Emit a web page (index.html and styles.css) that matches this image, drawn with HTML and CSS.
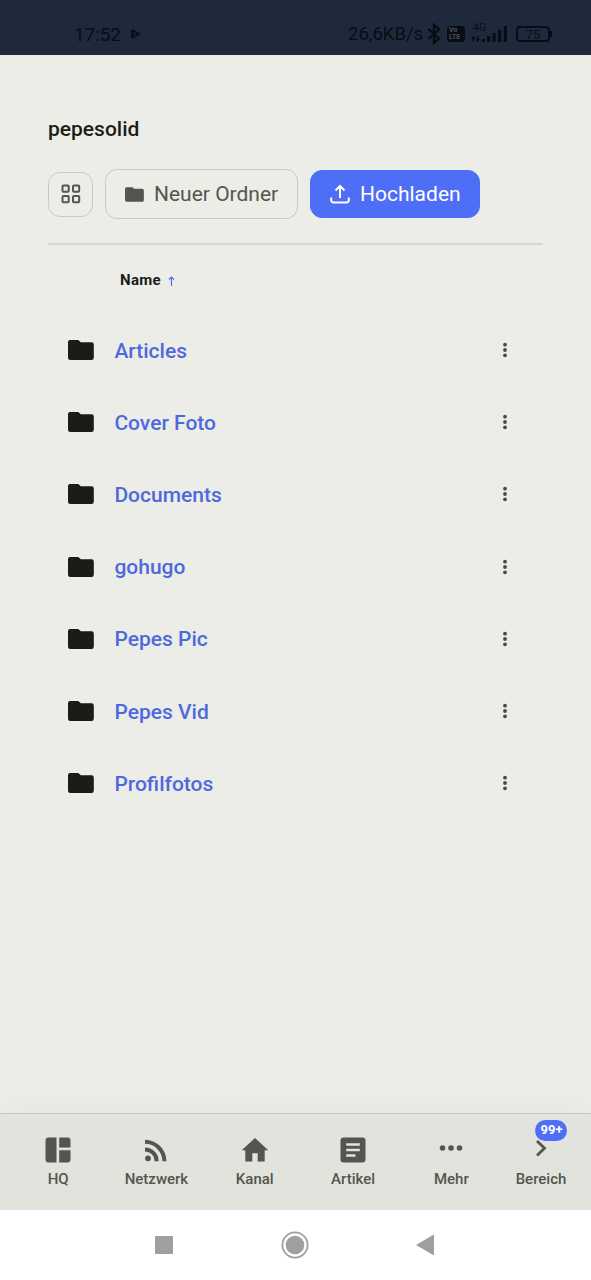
FILE: index.html
```html
<!DOCTYPE html>
<html lang="de">
<head>
<meta charset="utf-8">
<meta name="viewport" content="width=device-width, initial-scale=1">
<title>pepesolid</title>
<link rel="stylesheet" href="styles.css">
</head>
<body>
<svg width="0" height="0" class="defs">
  <symbol id="folder" viewBox="0 0 26 20"><path d="M2.200 0h8l2.600 2.300H23.500A2.300 2.300 0 0 1 25.800 4.600v13.100A2.300 2.300 0 0 1 23.500 20H2.500A2.500 2.500 0 0 1 0 17.500V2.200A2.200 2.200 0 0 1 2.200 0z" fill="currentColor"/></symbol>
  <symbol id="dots" viewBox="0 0 6 16"><g fill="currentColor"><circle cx="3" cy="2.700" r="1.900"/><circle cx="3" cy="8" r="1.900"/><circle cx="3" cy="13.300" r="1.900"/></g></symbol>
</svg>
<header class="status">
  <div class="status-left">
    <span class="clock">17:52</span>
    <svg width="11" height="12" viewBox="0 0 11 12" fill="none" stroke="currentColor" stroke-width="2"><path d="M2 1.800v8.400M2 2l7 4-7 4M2 6h3"/></svg>
  </div>
  <div class="status-right">
    <span class="rate">26,6KB/s</span>
    <svg class="bt" width="14" height="22" viewBox="0 0 14 22" fill="none" stroke="currentColor" stroke-width="2.300"><path d="M1.500 6L12 15.500 7 20V2l5 4.500L1.500 16"/></svg>
    <span class="volte"><span>Vo</span><span>LTE</span></span>
    <span class="signal">
      <span class="net">4G</span>
      <svg width="37" height="18" viewBox="0 0 37 18" fill="currentColor"><path d="M2 11l2.500 3H3v3H1.500v-3H0zM6.500 17L4.500 14H6v-3h1.500v3H9zM11 14h3v3h-3zM16 11h3.200v6H16zM21.500 8h3.200v9h-3.200zM27 5h3.200v12H27zM32.800 1H36v16h-3.200z"/></svg>
    </span>
    <span class="battery">75</span>
  </div>
</header>
<main class="files">
  <h1 class="title">pepesolid</h1>
  <div class="toolbar">
    <button class="btn view" aria-label="Ansicht"><svg width="20" height="20" viewBox="0 0 20 20" fill="none" stroke="currentColor" stroke-width="2"><rect x="1.500" y="1.500" width="6.200" height="6.200" rx="1"/><rect x="12" y="1.500" width="6.200" height="6.200" rx="1"/><rect x="1.500" y="12" width="6.200" height="6.200" rx="1"/><rect x="12" y="12" width="6.200" height="6.200" rx="1"/></svg></button>
    <button class="btn new"><svg width="19" height="15"><use href="#folder"/></svg><span>Neuer Ordner</span></button>
    <button class="btn upload"><svg width="20" height="20" viewBox="0 0 20 20" fill="none" stroke="currentColor" stroke-width="2"><path d="M10 14V2M5.500 6.500L10 2l4.500 4.500M1.200 13.500v2.700a2.300 2.300 0 0 0 2.300 2.300h13a2.300 2.300 0 0 0 2.300-2.300v-2.700"/></svg><span>Hochladen</span></button>
  </div>
  <div class="list-head"><span>Name</span><svg width="7" height="10" viewBox="0 0 7 10" fill="none" stroke="currentColor" stroke-width="1.200"><path d="M3.500 10V1M1 3.500L3.500 1 6 3.500"/></svg></div>
  <ul class="list">
    <li><svg class="folder"><use href="#folder"/></svg><a>Articles</a><svg class="more"><use href="#dots"/></svg></li>
    <li><svg class="folder"><use href="#folder"/></svg><a>Cover Foto</a><svg class="more"><use href="#dots"/></svg></li>
    <li><svg class="folder"><use href="#folder"/></svg><a>Documents</a><svg class="more"><use href="#dots"/></svg></li>
    <li><svg class="folder"><use href="#folder"/></svg><a>gohugo</a><svg class="more"><use href="#dots"/></svg></li>
    <li><svg class="folder"><use href="#folder"/></svg><a>Pepes Pic</a><svg class="more"><use href="#dots"/></svg></li>
    <li><svg class="folder"><use href="#folder"/></svg><a>Pepes Vid</a><svg class="more"><use href="#dots"/></svg></li>
    <li><svg class="folder"><use href="#folder"/></svg><a>Profilfotos</a><svg class="more"><use href="#dots"/></svg></li>
  </ul>
</main>
<nav class="tabs">
  <a class="tab"><svg viewBox="0 0 28 28"><path d="M4.500 1.500h8v25h-8a3 3 0 0 1-3-3v-19a3 3 0 0 1 3-3zM15.200 1.500h8.300a3 3 0 0 1 3 3v7H15.200zM15.200 14.200h11.300v9.300a3 3 0 0 1-3 3h-8.300z"/></svg><span>HQ</span></a>
  <a class="tab"><svg viewBox="0 0 28 28"><circle cx="6" cy="22.300" r="2.900"/><path d="M3 11.500v4a9.700 9.700 0 0 1 9.700 9.700h4A13.700 13.700 0 0 0 3 11.500zM3 3.800v4a17.400 17.400 0 0 1 17.400 17.400h4A21.400 21.400 0 0 0 3 3.800z"/></svg><span>Netzwerk</span></a>
  <a class="tab"><svg viewBox="0 0 28 28"><path d="M14 2L.7 14.200h3.600v11.300h7v-8.300h5.400v8.300h7V14.200h3.600z"/></svg><span>Kanal</span></a>
  <a class="tab"><svg viewBox="0 0 28 28"><path fill-rule="evenodd" d="M4.500 1.500h19a3 3 0 0 1 3 3v19a3 3 0 0 1-3 3h-19a3 3 0 0 1-3-3v-19a3 3 0 0 1 3-3zM7.200 7.200v2.600h13.600V7.200zM7.200 12.700v2.600h13.600v-2.600zM7.200 18.200v2.600h9.300v-2.600z"/></svg><span>Artikel</span></a>
  <a class="tab"><svg viewBox="0 0 28 28"><circle cx="5.500" cy="12" r="2.800"/><circle cx="14" cy="12" r="2.800"/><circle cx="22.500" cy="12" r="2.800"/></svg><span>Mehr</span></a>
  <a class="tab last"><svg viewBox="0 0 28 28"><path d="M10 5l7.500 7.200L10 19.500" fill="none" stroke="currentColor" stroke-width="2.800"/></svg><span>Bereich</span><b class="badge">99+</b></a>
</nav>
<footer class="system">
  <svg width="18" height="18"><rect width="18" height="18" rx="1"/></svg>
  <svg width="28" height="28"><circle cx="14" cy="14" r="12.600" fill="none" stroke="#9f9f9f" stroke-width="1.800"/><circle cx="14" cy="14" r="9.300"/></svg>
  <svg width="18" height="22"><path d="M0 11L17 1q1-.5 1 .7v18.600q0 1.200-1 .7z"/></svg>
</footer>
</body>
</html>
```
FILE: styles.css
```css
* { box-sizing: border-box; }
body {
  margin: 0;
  height: 1280px;
  display: flex;
  flex-direction: column;
  overflow: hidden;
  background: #ecede7;
  color: #1b1c18;
  font-family: Roboto, "Noto Sans", sans-serif;
}
svg { display: block; flex: none; }
.defs { position: absolute; }

.status {
  height: 55px;
  flex: none;
  padding: 13px 41px 0 74px;
  display: flex;
  justify-content: space-between;
  background: #1e293b;
  color: #080d14;
}
.status-left, .status-right { display: flex; align-items: center; height: 42px; }
.status-left { gap: 9px; }
.clock { font-size: 19px; letter-spacing: -.1px; }
.rate { font-size: 18.500px; width: 75px; white-space: nowrap; }
.bt { margin: 0 6px 0 4px; }
.volte {
  width: 18px;
  height: 16px;
  padding: 1px 2px;
  border-radius: 3px;
  background: #080d14;
  color: #4a5362;
  font-size: 7px;
  line-height: 7px;
  font-weight: 700;
}
.volte span { display: block; }
.signal { position: relative; margin-left: 6px; }
.net { position: absolute; top: -3px; left: 2px; font-size: 10.500px; line-height: 11px; }
.battery {
  position: relative;
  margin-left: 8px;
  width: 34px;
  height: 16px;
  border: 2px solid;
  border-radius: 4px;
  font-size: 13px;
  line-height: 13px;
  text-align: center;
}
.battery::after {
  content: "";
  position: absolute;
  right: -4px;
  top: 3px;
  width: 2px;
  height: 6px;
  background: currentColor;
}

.files { flex: 1; padding: 60px 48px 0; }
.title { margin: 0; font-size: 21px; line-height: 28px; font-weight: 500; }
.toolbar {
  height: 102px;
  padding-top: 2px;
  display: flex;
  align-items: center;
  gap: 12px;
  border-bottom: 2px solid #d6d7d0;
}
.btn {
  display: flex;
  align-items: center;
  gap: 10px;
  border: 1px solid #c8cac2;
  border-radius: 12px;
  background: none;
  color: #54554e;
  font: 400 21px Roboto, sans-serif;
  white-space: nowrap;
}
.view { width: 45px; height: 45px; padding: 0; justify-content: center; }
.new { width: 193px; height: 50px; padding: 0 0 0 19px; }
.upload { width: 170px; height: 48px; padding: 0 0 0 19px; border-color: #4f6ef7; background: #4f6ef7; color: #fff; }

.list-head {
  height: 69px;
  padding: 0 0 0 72px;
  display: flex;
  align-items: center;
  gap: 7px;
  font-size: 15px;
  font-weight: 700;
  letter-spacing: .3px;
}
.list-head svg { color: #4f6ef7; margin-top: 2px; }
.list { margin: 0; padding: 0; list-style: none; }
.list li {
  height: 72.200px;
  padding: 0 35px 0 20px;
  display: flex;
  align-items: center;
  font-size: 21px;
  font-weight: 500;
}
.list a { margin: 1px auto 0 20px; padding-left: .4px; color: #4e69df; }
.folder { width: 26px; height: 20px; }
.more { width: 6px; height: 16px; color: #4a4b45; }

.tabs {
  height: 97px;
  flex: none;
  display: flex;
  padding: 22px 0 0 9px;
  border-top: 1px solid #c4c6be;
  background: #e2e3dc;
  color: #54554e;
  box-shadow: 0 0 28px rgba(60, 60, 50, .04);
}
.tab {
  position: relative;
  width: 98.300px;
  flex: none;
  display: flex;
  flex-direction: column;
  align-items: center;
  gap: 6px;
  font-size: 15px;
  line-height: 18px;
  font-weight: 500;
}
.tab svg { width: 28px; height: 28px; fill: currentColor; }
.last { width: 81px; }
.badge {
  position: absolute;
  top: -16px;
  left: 35px;
  width: 32px;
  height: 21px;
  border-radius: 11px;
  background: #4f6ef7;
  color: #fff;
  font-size: 13px;
  line-height: 20px;
  text-align: center;
}
.system {
  height: 70px;
  flex: none;
  padding: 0 157px 0 155px;
  display: flex;
  align-items: center;
  justify-content: space-between;
  background: #fff;
  fill: #9f9f9f;
}
```
